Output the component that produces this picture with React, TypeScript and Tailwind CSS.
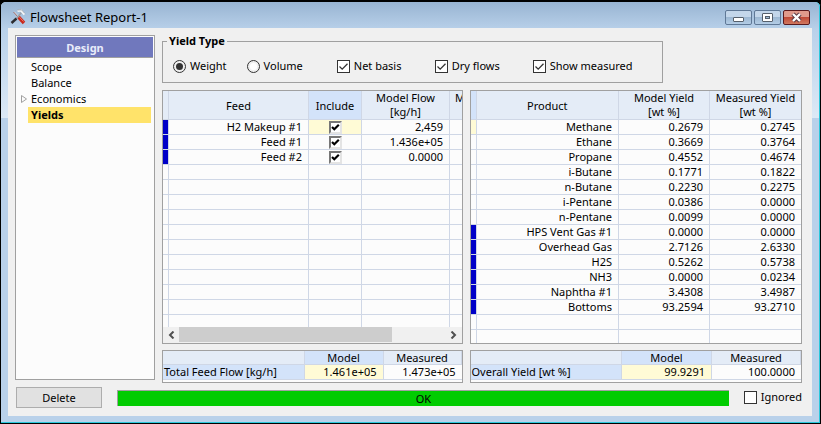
import React from "react";

const cell = "h-[15px] p-0 leading-[14px] border-b border-[#cfd7e6] whitespace-nowrap overflow-hidden";

type Feed = { name: string; flow: string };
const feeds: Feed[] = [
  { name: "H2 Makeup #1", flow: "2,459" },
  { name: "Feed #1", flow: "1.436e+05" },
  { name: "Feed #2", flow: "0.0000" },
];

type Product = { name: string; model: string; measured: string; stream?: boolean };
const products: Product[] = [
  { name: "Methane", model: "0.2679", measured: "0.2745" },
  { name: "Ethane", model: "0.3669", measured: "0.3764" },
  { name: "Propane", model: "0.4552", measured: "0.4674" },
  { name: "i-Butane", model: "0.1771", measured: "0.1822" },
  { name: "n-Butane", model: "0.2230", measured: "0.2275" },
  { name: "i-Pentane", model: "0.0386", measured: "0.0000" },
  { name: "n-Pentane", model: "0.0099", measured: "0.0000" },
  { name: "HPS Vent Gas #1", model: "0.0000", measured: "0.0000", stream: true },
  { name: "Overhead Gas", model: "2.7126", measured: "2.6330", stream: true },
  { name: "H2S", model: "0.5262", measured: "0.5738", stream: true },
  { name: "NH3", model: "0.0000", measured: "0.0234", stream: true },
  { name: "Naphtha #1", model: "3.4308", measured: "3.4987", stream: true },
  { name: "Bottoms", model: "93.2594", measured: "93.2710", stream: true },
];

function ToolsIcon() {
  return (
    <svg width="16" height="16" viewBox="0 0 16 16" fill="none" aria-hidden="true">
      <path d="M4 3 L9 8.500" stroke="#d4dae2" strokeWidth="1.600" />
      <path d="M3.500 3 L8.500 8.500" stroke="#8a4a4a" strokeWidth="0.800" />
      <path d="M8.500 8 L14 14" stroke="#c8281c" strokeWidth="3.400" />
      <path d="M9.500 8.200 L13.500 12.500" stroke="#f08070" strokeWidth="0.900" />
      <path d="M11.500 3.500 L6.500 9.500" stroke="#9aa0a8" strokeWidth="1.600" />
      <path d="M6.500 9.500 L1.500 14" stroke="#2c2c30" strokeWidth="2.400" />
      <path d="M7.500 2 L11 1.500 L14.500 5.500" stroke="#f4f6f8" strokeWidth="2.200" />
      <path d="M7.500 1 L11.500 0.800 L15 4.600" stroke="#8b919a" strokeWidth="0.700" />
    </svg>
  );
}

function WindowButton({ label, close, children }: { label: string; close?: boolean; children: React.ReactNode }) {
  return (
    <button
      aria-label={label}
      className={
        "flex h-[15px] w-[27px] items-center justify-center rounded-[2px] border " +
        (close
          ? "border-[#5a1a1e] bg-linear-to-b from-[#e09a8c] from-45% via-[#c04a38] via-50% to-[#d07860]"
          : "border-[#5f7896] bg-linear-to-b from-[#c3d6ea] from-45% via-[#9db8d3] via-50% to-[#b4cde6]")
      }
    >
      {children}
    </button>
  );
}

function Check({ label, checked, wide }: { label: string; checked?: boolean; wide?: boolean }) {
  return (
    <label className={"flex items-center gap-1 whitespace-nowrap " + (wide ? "w-[98px]" : "")}>
      <span className="relative flex size-[13px]">
        <input type="checkbox" defaultChecked={checked} className="peer size-[13px] appearance-none border border-[#333] bg-white" />
        <svg viewBox="0 0 13 13" className="pointer-events-none absolute inset-0 hidden peer-checked:block" fill="none" aria-hidden="true">
          <path d="M2.500 6.500 L5.200 9.200 L10.500 3.800" stroke="#333" strokeWidth="1.300" />
        </svg>
      </span>
      {label}
    </label>
  );
}

function Radio({ label, checked }: { label: string; checked?: boolean }) {
  return (
    <label className="flex items-center gap-1">
      <input
        type="radio"
        name="yield-type"
        defaultChecked={checked}
        className="size-[13px] appearance-none rounded-full border border-[#333] bg-white bg-clip-content p-[2px] checked:bg-[#333]"
      />
      {label}
    </label>
  );
}

function IncludeBox({ name }: { name: string }) {
  return (
    <span className="relative mx-auto flex size-[13px]">
      <input
        type="checkbox"
        defaultChecked
        aria-label={"Include " + name}
        className="peer size-[13px] appearance-none border-2 border-t-[#777] border-r-[#e4e4e4] border-b-[#e4e4e4] border-l-[#777] bg-white"
      />
      <svg viewBox="0 0 13 13" className="pointer-events-none absolute inset-0 hidden peer-checked:block" fill="none" aria-hidden="true">
        <path d="M3 6 L5.300 8.300 L9.800 3.800" stroke="#000" strokeWidth="2.200" />
      </svg>
    </span>
  );
}

const head = "p-0 font-normal leading-[15px] bg-[#e4ecf7] border-b border-[#cfd7e6] whitespace-nowrap overflow-hidden";

function FeedTable() {
  return (
    <div className="flex min-w-0 flex-col border border-[#a0a0a0] bg-[#fcfcfc]">
      <div className="grow basis-0 overflow-hidden">
        <table className="w-[375px] table-fixed border-separate border-spacing-0">
          <colgroup>
            <col className="w-[6px]" />
            <col className="w-[140px]" />
            <col className="w-[53px]" />
            <col className="w-[88px]" />
            <col />
          </colgroup>
          <thead>
            <tr className="h-[29px]">
              <th className={head + " border-r"}></th>
              <th className={head + " border-r"}>Feed</th>
              <th className={head + " border-r bg-[#d3e3fa]!"}>Include</th>
              <th className={head + " border-r leading-[14px]!"}>Model Flow<br />[kg/h]</th>
              <th className={head + " leading-[14px]!"}>Measured Flow<br />[kg/h]</th>
            </tr>
          </thead>
          <tbody>
            {Array.from({ length: 14 }, (_, i) => (
              <tr key={i}>
                <td className={cell + " border-r " + (feeds[i] ? "bg-[#0000c8]" : "")}></td>
                <td className={cell + " border-r pr-[6px] text-right"}>{feeds[i]?.name}</td>
                <td className={cell + " border-r " + (i === 0 ? "bg-[#fffbd6]" : "")}>{feeds[i] && <IncludeBox name={feeds[i].name} />}</td>
                <td className={cell + " border-r pr-[6px] text-right"}>{feeds[i]?.flow}</td>
                <td className={cell}></td>
              </tr>
            ))}
          </tbody>
        </table>
      </div>
      <div className="flex h-4 bg-[#f0f0f0]">
        <button aria-label="Scroll left" className="flex w-4 items-center justify-center">
          <svg width="7" height="8" viewBox="0 0 7 8" fill="none"><path d="M5.500 0.500 L2 4 L5.500 7.500" stroke="#505050" strokeWidth="2" /></svg>
        </button>
        <div className="flex-1"><div className="h-[15px] w-4/5 bg-[#cdcdcd]" /></div>
        <button aria-label="Scroll right" className="flex w-4 items-center justify-center">
          <svg width="7" height="8" viewBox="0 0 7 8" fill="none"><path d="M1.500 0.500 L5 4 L1.500 7.500" stroke="#505050" strokeWidth="2" /></svg>
        </button>
      </div>
    </div>
  );
}

function ProductTable() {
  return (
    <div className="min-w-0 border border-[#a0a0a0] bg-[#fcfcfc]">
      <table className="w-full table-fixed border-separate border-spacing-0">
        <colgroup>
          <col className="w-[6px]" />
          <col />
          <col className="w-[91px]" />
          <col className="w-[91px]" />
        </colgroup>
        <thead>
          <tr className="h-[29px]">
            <th className={head + " border-r bg-[#d3e3fa]!"}></th>
            <th className={head + " border-r"}>Product</th>
            <th className={head + " border-r leading-[14px]!"}>Model Yield<br />[wt %]</th>
            <th className={head + " leading-[14px]!"}>Measured Yield<br />[wt %]</th>
          </tr>
        </thead>
        <tbody>
          {products.map((p, i) => (
            <tr key={p.name}>
              <td className={cell + " border-r " + (p.stream ? "bg-[#0000c8]" : i === 0 ? "bg-[#fffbd6]" : "")}></td>
              <td className={cell + " border-r pr-[6px] text-right"}>{p.name}</td>
              <td className={cell + " border-r pr-[6px] text-right"}>{p.model}</td>
              <td className={cell + " pr-[6px] text-right"}>{p.measured}</td>
            </tr>
          ))}
          <tr>
            <td className={cell + " border-r"}></td>
            <td className={cell + " border-r"}></td>
            <td className={cell + " border-r"}></td>
            <td className={cell}></td>
          </tr>
          <tr className="h-[13px]">
            <td className="border-r border-[#cfd7e6]"></td>
            <td className="border-r border-[#cfd7e6]"></td>
            <td className="border-r border-[#cfd7e6]"></td>
            <td></td>
          </tr>
        </tbody>
      </table>
    </div>
  );
}

function Summary({ label, model, measured, narrow }: { label: string; model: string; measured: string; narrow?: boolean }) {
  return (
    <div className="min-w-0 border border-[#a0a0a0] bg-[#fcfcfc] pb-[2px]">
      <table className="w-full table-fixed border-separate border-spacing-0">
        <colgroup>
          <col />
          <col className={narrow ? "w-[79px]" : "w-[90px]"} />
          <col className={narrow ? "w-[78px]" : "w-[89px]"} />
        </colgroup>
        <thead>
          <tr className="h-[14px]">
            <th className={head + " border-r leading-[13px]!"}></th>
            <th className={head + " border-r bg-[#d3e3fa]! leading-[13px]!"}>Model</th>
            <th className={head + " border-r leading-[13px]!"}>Measured</th>
          </tr>
        </thead>
        <tbody>
          <tr>
            <th className={cell + " border-r bg-[#d3e3fa] pl-px text-left font-normal"}>{label}</th>
            <td className={cell + " border-r bg-[#fffbd6] pr-[6px] text-right"}>{model}</td>
            <td className={cell + " pr-[6px] text-right"}>{measured}</td>
          </tr>
        </tbody>
      </table>
    </div>
  );
}

const navItem = "block w-full h-4 pl-[3px] text-left leading-4";

export default function App() {
  return (
    <div className="bg-black font-['Noto_Sans','Open_Sans',sans-serif] text-[11px] text-black">
      <div className="rounded-t-md border border-t-2 border-black bg-[#b9d1ea]">
        <div className="rounded-t-[5px] border-r border-b border-[#2cc8dc] bg-[linear-gradient(#98b4d2,#b9d1ea_28px,#dce9f6_116px,#b9d1ea_116px)] px-[7px] pb-[6px]">
          <header className="flex h-[26px] items-center pt-1 pr-[2px] pl-[2px]">
            <ToolsIcon />
            <h1 className="ml-1 flex-1 text-[13px] leading-4">Flowsheet Report-1</h1>
            <div className="flex gap-[2px]">
              <WindowButton label="Minimize">
                <span className="mt-1 h-[5px] w-[11px] rounded-[1px] border border-[#56606c] bg-white" />
              </WindowButton>
              <WindowButton label="Maximize">
                <span className="flex h-[9px] w-[11px] items-center justify-center rounded-[1px] border border-[#56606c] bg-white">
                  <span className="h-[3px] w-[5px] border border-[#56606c] bg-[#9db8d3]" />
                </span>
              </WindowButton>
              <WindowButton label="Close" close>
                <svg width="13" height="11" viewBox="0 0 13 11" fill="none">
                  <path d="M3 2 L10 9 M10 2 L3 9" stroke="#5a3a44" strokeWidth="4.400" />
                  <path d="M3 2 L10 9 M10 2 L3 9" stroke="#fff" strokeWidth="2.400" />
                </svg>
              </WindowButton>
            </div>
          </header>
          <main className="flex flex-col gap-1 bg-[#f0f0f0] pt-[7px] pr-[10px] pb-2 pl-[7px]">
            <div className="flex gap-[7px]">
              <nav className="mb-[3px] w-[140px] shrink-0 border border-[#a0a0a0] bg-[#fcfcfc] p-px">
                <h2 className="mb-px h-[21px] border-b border-[#a0a0a0] bg-[#7078bd] text-center leading-[21px] font-bold text-[#e8ecfa]">Design</h2>
                <ul className="pr-[2px] pl-[11px]">
                  <li><button className={navItem}>Scope</button></li>
                  <li><button className={navItem}>Balance</button></li>
                  <li className="relative">
                    <svg className="absolute top-1 -left-[7px]" width="6" height="8" viewBox="0 0 6 8" fill="none" aria-hidden="true">
                      <path d="M0.500 0.500 L5.500 4 L0.500 7.500 Z" stroke="#a0a0a0" />
                    </svg>
                    <button className={navItem}>Economics</button>
                  </li>
                  <li><button className={navItem + " bg-[#ffe36a] font-bold"}>Yields</button></li>
                </ul>
              </nav>
              <div className="flex min-w-0 flex-1 flex-col gap-[7px]">
                <fieldset className="h-12 w-[501px] border border-[#a0a0a0] pl-[10px]">
                  <legend className="-ml-[6px] px-[2px] leading-3 font-bold">Yield Type</legend>
                  <div className="flex gap-[34px] pt-3 leading-[14px]">
                    <div className="flex gap-5"><Radio label="Weight" checked /><Radio label="Volume" /></div>
                    <div className="flex">
                      <Check label="Net basis" checked wide />
                      <Check label="Dry flows" checked wide />
                      <Check label="Show measured" checked wide />
                    </div>
                  </div>
                </fieldset>
                <div className="grid grid-cols-[301fr_333fr] gap-x-[7px] gap-y-[6px]">
                  <FeedTable />
                  <ProductTable />
                  <Summary label="Total Feed Flow [kg/h]" model="1.461e+05" measured="1.473e+05" narrow />
                  <Summary label="Overall Yield [wt %]" model="99.9291" measured="100.0000" />
                </div>
              </div>
            </div>
            <footer className="flex items-center gap-[15px] pl-px">
              <button className="h-[21px] w-[86px] border border-[#adadad] bg-[#e1e1e1] leading-[19px]">Delete</button>
              <div role="status" className="h-4 flex-1 border-t border-l border-[#a0a0a0] bg-[#00cc00] text-center leading-[15px]">OK</div>
              <Check label="Ignored" />
            </footer>
          </main>
        </div>
      </div>
    </div>
  );
}
